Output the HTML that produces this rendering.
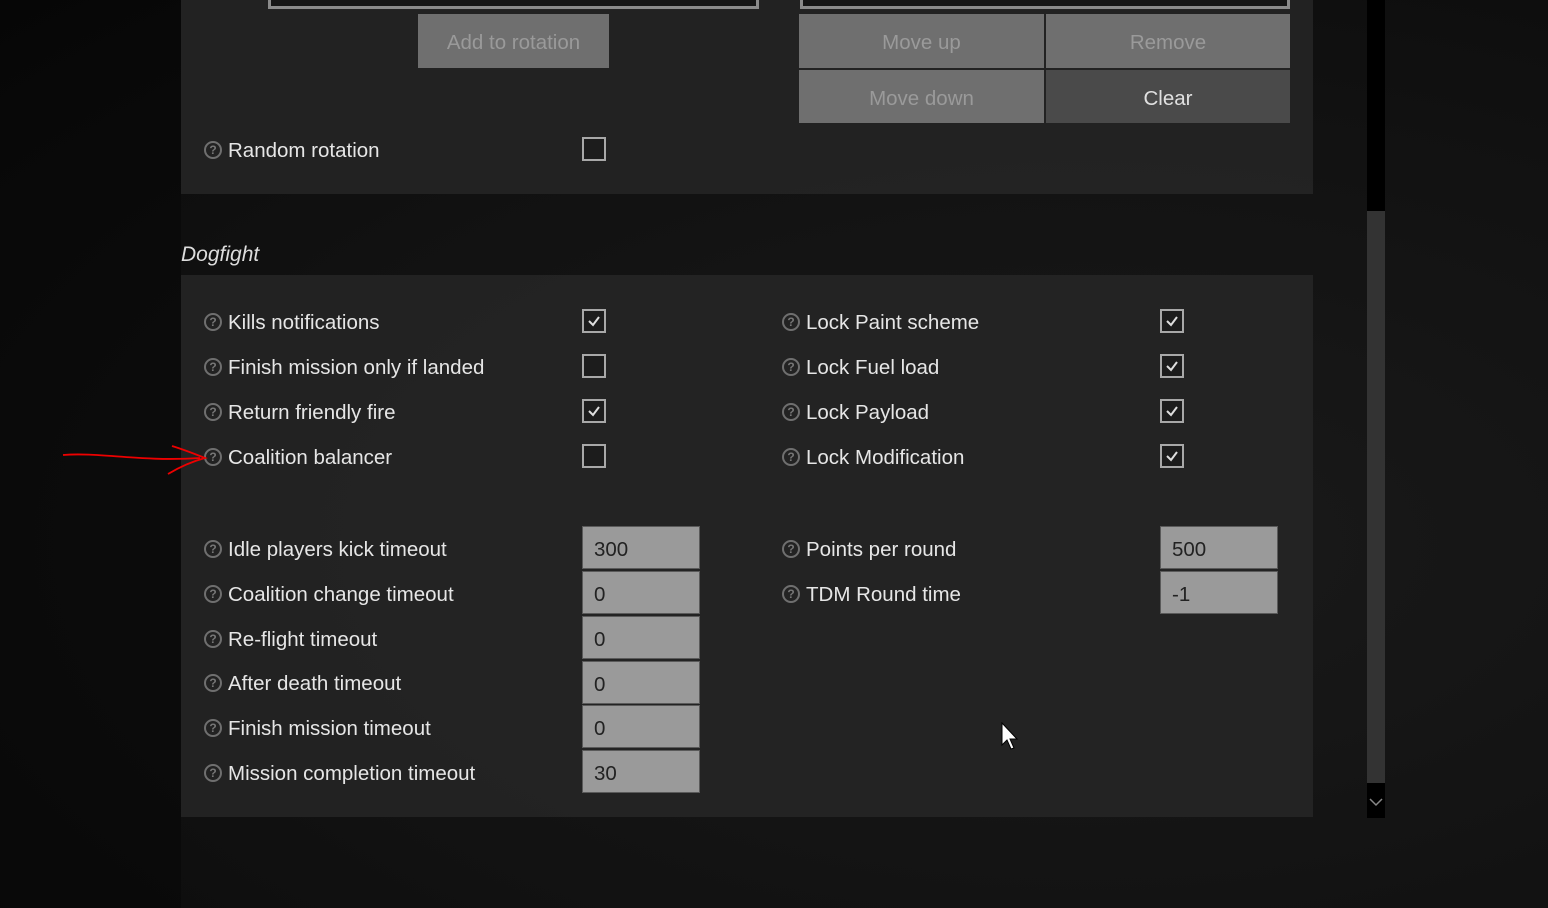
<!DOCTYPE html>
<html><head><style>
*{margin:0;padding:0;box-sizing:border-box}
body{width:1548px;height:908px;overflow:hidden;background:#0e0e0e;font-family:"Liberation Sans",sans-serif;position:relative}
.bg{position:absolute;left:0;top:0;width:1548px;height:908px;background:radial-gradient(ellipse at 70% 60%,#1a1a1a 0%,#111 60%,#0a0a0a 100%)}
.panel{position:absolute;left:181px;width:1132px;background:rgba(36,36,36,0.95)}
.a{position:absolute}
.lbl{position:absolute;color:#e6e6e6;font-size:20.5px;line-height:24px;white-space:nowrap}
.q{position:absolute;width:18px;height:18px;border:2px solid #6f6f6f;border-radius:50%;color:#777;font-size:12px;font-weight:bold;line-height:14px;text-align:center}
.cb{position:absolute;width:24px;height:24px;border:2px solid #a8a8a8;background:#1c1c1c}
.cb svg{position:absolute;left:2px;top:2px}
.in{position:absolute;width:118px;height:43px;background:#9a9a9a;border:1px solid #5a5a5a;color:#222;font-size:20.5px;line-height:45px;padding-left:11px}
.btn{position:absolute;background:#6f6f6f;color:#9a9a9a;font-size:20.5px;text-align:center}
</style></head><body>
<div class="bg"></div>
<div class="a" style="left:0;top:0;width:181px;height:908px;background:rgba(0,0,0,0.3)"></div>
<div class="panel" style="top:0;height:194px"></div>
<div class="panel" style="top:275px;height:542px"></div>

<div class="a" style="left:268px;top:-4px;width:491px;height:13px;border:3px solid #8a8a8a;border-top:none;background:#151515"></div>
<div class="a" style="left:800px;top:-4px;width:490px;height:13px;border:3px solid #8a8a8a;border-top:none;background:#151515"></div>

<div class="btn" style="left:418px;top:14px;width:191px;height:54px;line-height:58px">Add to rotation</div>
<div class="btn" style="left:799px;top:14px;width:245px;height:54px;line-height:58px">Move up</div>
<div class="btn" style="left:1046px;top:14px;width:244px;height:54px;line-height:58px">Remove</div>
<div class="btn" style="left:799px;top:70px;width:245px;height:53px;line-height:57px">Move down</div>
<div class="btn" style="left:1046px;top:70px;width:244px;height:53px;line-height:57px;background:#4a4a4a;color:#e0e0e0">Clear</div>

<div class="q" style="left:204px;top:141px">?</div><div class="lbl" style="left:228px;top:139px">Random rotation</div>
<div class="cb" style="left:582px;top:137px"></div>

<div class="lbl" style="left:181px;top:243px;font-style:italic;font-size:21px;color:#ddd">Dogfight</div>

<div class="q" style="left:204px;top:313px">?</div><div class="lbl" style="left:228px;top:311px">Kills notifications</div>
<div class="q" style="left:204px;top:358px">?</div><div class="lbl" style="left:228px;top:356px">Finish mission only if landed</div>
<div class="q" style="left:204px;top:403px">?</div><div class="lbl" style="left:228px;top:401px">Return friendly fire</div>
<div class="q" style="left:204px;top:448px">?</div><div class="lbl" style="left:228px;top:446px">Coalition balancer</div>
<div class="cb" style="left:582px;top:309px"><svg width="16" height="16"><path d="M3 8 L7 12 L13 4" stroke="#ddd" stroke-width="2" fill="none"/></svg></div>
<div class="cb" style="left:582px;top:354px"></div>
<div class="cb" style="left:582px;top:399px"><svg width="16" height="16"><path d="M3 8 L7 12 L13 4" stroke="#ddd" stroke-width="2" fill="none"/></svg></div>
<div class="cb" style="left:582px;top:444px"></div>

<div class="q" style="left:782px;top:313px">?</div><div class="lbl" style="left:806px;top:311px">Lock Paint scheme</div>
<div class="q" style="left:782px;top:358px">?</div><div class="lbl" style="left:806px;top:356px">Lock Fuel load</div>
<div class="q" style="left:782px;top:403px">?</div><div class="lbl" style="left:806px;top:401px">Lock Payload</div>
<div class="q" style="left:782px;top:448px">?</div><div class="lbl" style="left:806px;top:446px">Lock Modification</div>
<div class="cb" style="left:1160px;top:309px"><svg width="16" height="16"><path d="M3 8 L7 12 L13 4" stroke="#ddd" stroke-width="2" fill="none"/></svg></div>
<div class="cb" style="left:1160px;top:354px"><svg width="16" height="16"><path d="M3 8 L7 12 L13 4" stroke="#ddd" stroke-width="2" fill="none"/></svg></div>
<div class="cb" style="left:1160px;top:399px"><svg width="16" height="16"><path d="M3 8 L7 12 L13 4" stroke="#ddd" stroke-width="2" fill="none"/></svg></div>
<div class="cb" style="left:1160px;top:444px"><svg width="16" height="16"><path d="M3 8 L7 12 L13 4" stroke="#ddd" stroke-width="2" fill="none"/></svg></div>

<svg class="a" style="left:60px;top:440px" width="150" height="40"><path d="M3 15 C40 12,80 22,140 18 M112 6 C125 10,135 14,145 18 C130 22,118 28,108 34" stroke="#e00" stroke-width="1.8" fill="none"/></svg>

<div class="q" style="left:204px;top:540px">?</div><div class="lbl" style="left:228px;top:538px">Idle players kick timeout</div>
<div class="q" style="left:204px;top:585px">?</div><div class="lbl" style="left:228px;top:583px">Coalition change timeout</div>
<div class="q" style="left:204px;top:630px">?</div><div class="lbl" style="left:228px;top:628px">Re-flight timeout</div>
<div class="q" style="left:204px;top:674px">?</div><div class="lbl" style="left:228px;top:672px">After death timeout</div>
<div class="q" style="left:204px;top:719px">?</div><div class="lbl" style="left:228px;top:717px">Finish mission timeout</div>
<div class="q" style="left:204px;top:764px">?</div><div class="lbl" style="left:228px;top:762px">Mission completion timeout</div>
<div class="in" style="left:582px;top:526px">300</div>
<div class="in" style="left:582px;top:571px">0</div>
<div class="in" style="left:582px;top:616px">0</div>
<div class="in" style="left:582px;top:661px">0</div>
<div class="in" style="left:582px;top:705px">0</div>
<div class="in" style="left:582px;top:750px">30</div>

<div class="q" style="left:782px;top:540px">?</div><div class="lbl" style="left:806px;top:538px">Points per round</div>
<div class="q" style="left:782px;top:585px">?</div><div class="lbl" style="left:806px;top:583px">TDM Round time</div>
<div class="in" style="left:1160px;top:526px">500</div>
<div class="in" style="left:1160px;top:571px">-1</div>

<div class="a" style="left:1367px;top:0;width:18px;height:818px;background:#000"></div>
<div class="a" style="left:1367px;top:211px;width:18px;height:572px;background:#333"></div>
<svg class="a" style="left:1367px;top:795px" width="18" height="16"><path d="M3 4 L9 10 L15 4" stroke="#888" stroke-width="1.5" fill="none"/></svg>

<svg class="a" style="left:1000px;top:722px" width="22" height="32"><path d="M2 1 L2 23 L7 18 L11 27 L14 26 L10 17 L17 17 Z" fill="#fff" stroke="#000" stroke-width="1"/></svg>
</body></html>
